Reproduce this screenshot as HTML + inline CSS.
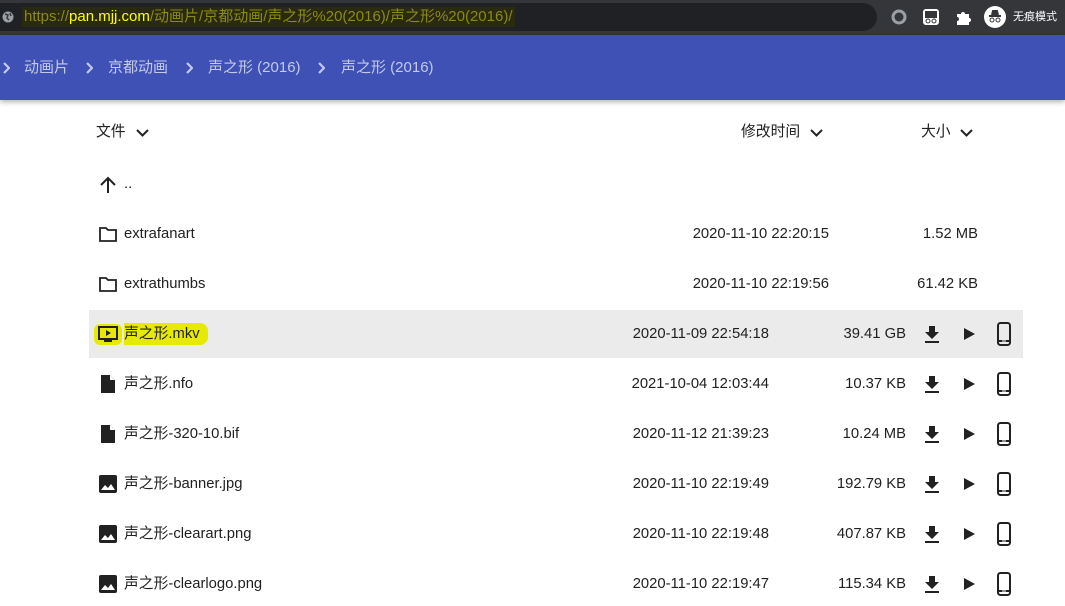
<!DOCTYPE html>
<html><head><meta charset="utf-8"><style>
*{margin:0;padding:0;box-sizing:border-box}
body{width:1065px;height:606px;overflow:hidden;background:#fff;font-family:"Liberation Sans","Noto Sans CJK SC",sans-serif;position:relative;color:#212121}
.top{position:absolute;left:0;top:0;width:1065px;height:35px;background:#35363a}
.url{position:absolute;left:0;top:3px;width:877px;height:28px;background:#202124;border-radius:0 14px 14px 0}
.urlt{position:absolute;left:22px;top:7px;font-size:15px;line-height:20px;color:#8a8a1a;background:#2a2a10;padding:0 2px;white-space:nowrap}
.urlt b{font-weight:normal;color:#ffff00}
.bar{position:absolute;left:0;top:35px;width:1065px;height:65px;background:#3f51b5;box-shadow:0 2px 5px rgba(0,0,0,.3)}
.bc{position:absolute;top:23px;font-size:15px;line-height:20px;color:#c5cae9;white-space:nowrap}
.a{position:absolute;font-size:14.8px;line-height:20px;white-space:nowrap}
.row{position:absolute;left:89px;width:934px;height:48px}
.ic{position:absolute}
</style></head><body>
<div class="top"><div class="url"></div>
<svg class="ic" style="left:2px;top:11px" width="12" height="12" viewBox="0 0 12 12"><circle cx="6" cy="6" r="5.5" fill="#9aa0a6"/><path d="M3 3l3 1 -1 3 2 2M8 2l1 3" stroke="#35363a" stroke-width="1.5" fill="none"/></svg>
<div class="urlt">https://<b>pan.mjj.com</b>/动画片/京都动画/声之形%20(2016)/声之形%20(2016)/</div>
<svg class="ic" style="left:891px;top:9px" width="16" height="16"><circle cx="8" cy="8" r="6" stroke="#9aa0a6" stroke-width="3" fill="none"/></svg>
<svg class="ic" style="left:922px;top:8px" width="18" height="18"><rect x="1" y="1" width="16" height="16" rx="3" fill="#fff"/><rect x="3" y="3" width="12" height="7" fill="#35363a"/><circle cx="6" cy="13" r="2" stroke="#35363a" fill="none"/><circle cx="12" cy="13" r="2" stroke="#35363a" fill="none"/></svg>
<svg class="ic" style="left:955px;top:9px" width="16" height="16"><path d="M2 5h4a2 2 0 1 1 4 0h4v4a2 2 0 1 1 0 4v3H2v-4a2 2 0 1 0 0-4z" fill="#fff"/></svg>
<svg class="ic" style="left:984px;top:6px" width="22" height="22"><circle cx="11" cy="11" r="11" fill="#fff"/><path d="M5 10h12M8 9l1-4h4l1 4" stroke="#35363a" stroke-width="2" fill="#35363a"/><circle cx="8" cy="14" r="2" stroke="#35363a" fill="none"/><circle cx="14" cy="14" r="2" stroke="#35363a" fill="none"/></svg>
<div class="a" style="left:1013px;top:7px;color:#fff;font-size:11px">无痕模式</div>
</div>
<div class="bar">
<svg class="ic" style="left:2px;top:27px" width="8" height="12"><path d="M2 1l5 5-5 5" stroke="#c5cae9" stroke-width="2.2" fill="none"/></svg>
<div class="bc" style="left:24px">动画片</div>
<svg class="ic" style="left:85px;top:27px" width="8" height="12"><path d="M2 1l5 5-5 5" stroke="#c5cae9" stroke-width="2.2" fill="none"/></svg>
<div class="bc" style="left:108px">京都动画</div>
<svg class="ic" style="left:185px;top:27px" width="8" height="12"><path d="M2 1l5 5-5 5" stroke="#c5cae9" stroke-width="2.2" fill="none"/></svg>
<div class="bc" style="left:208px">声之形 (2016)</div>
<svg class="ic" style="left:317px;top:27px" width="8" height="12"><path d="M2 1l5 5-5 5" stroke="#c5cae9" stroke-width="2.2" fill="none"/></svg>
<div class="bc" style="left:341px">声之形 (2016)</div>
</div>
<div class="a" style="left:96px;top:122px">文件</div>
<div class="a" style="left:741px;top:122px">修改时间</div>
<div class="a" style="left:921px;top:122px">大小</div>
<svg class="ic" style="left:136px;top:129px" width="13" height="8"><path d="M1 1l5.5 5.5L12 1" stroke="#212121" stroke-width="2" fill="none"/></svg>
<svg class="ic" style="left:810px;top:129px" width="13" height="8"><path d="M1 1l5.5 5.5L12 1" stroke="#212121" stroke-width="2" fill="none"/></svg>
<svg class="ic" style="left:960px;top:129px" width="13" height="8"><path d="M1 1l5.5 5.5L12 1" stroke="#212121" stroke-width="2" fill="none"/></svg>
<svg class="ic" style="left:99px;top:176px" width="18" height="18"><path d="M9 17V2M2 9l7-7 7 7" stroke="#212121" stroke-width="2" fill="none"/></svg>
<div class="a" style="left:124px;top:174px">..</div>
<div class="row" style="top:310px;background:#ebebeb"></div>
<div id="rows"></div>
<script>
var folder='<path d="M2 4h6l2 2h8v11H2z" stroke="#212121" stroke-width="1.8" fill="none"/>';
var tv='<rect x="-4" y="0" width="28" height="21" rx="6" fill="#e6ea00"/><rect x="1" y="3" width="18" height="12" stroke="#212121" stroke-width="2" fill="none"/><path d="M8 6v6l5-3z" fill="#212121"/><path d="M6 17h8" stroke="#212121" stroke-width="2"/>';
var file='<path d="M3 1h9l5 5v13H3z" fill="#212121"/><path d="M12 1v5h5z" fill="#fff"/>';
var img='<rect x="1" y="1" width="18" height="18" rx="2" fill="#212121"/><path d="M3 16l4-5 3 3 3-4 4 6z" fill="#fff"/>';
var R=[[234,folder,'extrafanart','2020-11-10 22:20:15','1.52 MB',0],
[284,folder,'extrathumbs','2020-11-10 22:19:56','61.42 KB',0],
[334,tv,'声之形.mkv','2020-11-09 22:54:18','39.41 GB',1],
[384,file,'声之形.nfo','2021-10-04 12:03:44','10.37 KB',1],
[434,file,'声之形-320-10.bif','2020-11-12 21:39:23','10.24 MB',1],
[484,img,'声之形-banner.jpg','2020-11-10 22:19:49','192.79 KB',1],
[534,img,'声之形-clearart.png','2020-11-10 22:19:48','407.87 KB',1],
[584,img,'声之形-clearlogo.png','2020-11-10 22:19:47','115.34 KB',1]];
var h='';
R.forEach(function(r){var y=r[0];
h+='<svg class="ic" style="left:98px;top:'+(y-10)+'px;overflow:visible" width="20" height="20">'+r[1]+'</svg>';
h+='<div class="a" style="left:124px;top:'+(y-10)+'px'+(y==334?';background:#e6ea00;padding:1px 8px 1px 0;border-radius:0 8px 8px 0;top:'+(y-11)+'px':'')+'">'+r[2]+'</div>';
var de=r[5]?769:829, se=r[5]?906:978;
h+='<div class="a" style="right:'+(1065-de)+'px;top:'+(y-10)+'px">'+r[3]+'</div>';
h+='<div class="a" style="right:'+(1065-se)+'px;top:'+(y-10)+'px">'+r[4]+'</div>';
if(r[5]){
h+='<svg class="ic" style="left:924px;top:'+(y-9)+'px" width="16" height="18"><path d="M5 1h6v6h4l-7 7-7-7h4z M1 16h14v2H1z" fill="#212121"/></svg>';
h+='<svg class="ic" style="left:963px;top:'+(y-7)+'px" width="12" height="14"><path d="M1 1l11 6-11 6z" fill="#212121"/></svg>';
h+='<svg class="ic" style="left:996px;top:'+(y-12)+'px" width="16" height="24"><rect x="2" y="1" width="12" height="22" rx="2.5" stroke="#212121" stroke-width="2" fill="none"/><path d="M3 19h10" stroke="#212121" stroke-width="2"/><path d="M6 19h4" stroke="#fff" stroke-width="1"/></svg>';}
});
document.getElementById('rows').innerHTML=h;
</script>
</body></html>
